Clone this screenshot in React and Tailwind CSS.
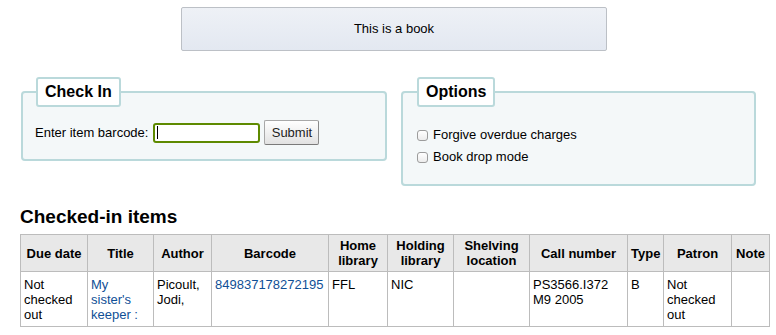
export default function App() {
  const colCls = [
    "w-[67px]",
    "w-[66px]",
    "w-[58px]",
    "w-[117px]",
    "w-[59px]",
    "w-[66px]",
    "w-[76px]",
    "w-[98px]",
    "w-[36px]",
    "w-[68px]",
    "w-[38px]",
  ];
  const headers = [
    "Due date",
    "Title",
    "Author",
    "Barcode",
    "Home library",
    "Holding library",
    "Shelving location",
    "Call number",
    "Type",
    "Patron",
    "Note",
  ];
  const th =
    "border border-[#bcbcbc] bg-[#e8e8e8] font-bold text-center align-middle px-[3px] py-[3px] leading-[15px]";
  const td =
    "border border-[#bcbcbc] align-top px-[3px] pt-[5px] pb-[4px] leading-[15px]";
  return (
    <div className="w-[776px] h-[335px] overflow-hidden bg-white text-black text-[13px] font-['Liberation_Sans',Arial,sans-serif]">
      <div className="pt-[7px]">
        <div className="ml-[181px] w-[426px] h-[44px] flex items-center justify-center border border-[#bcc0c6] rounded-[2px] bg-gradient-to-b from-[#eef1f6] to-[#e3e8f1]">
          This is a book
        </div>
      </div>

      <div className="flex items-start mt-[26px]">
        <fieldset className="ml-[21px] w-[366px] border-2 border-[#bad9db] rounded-[4px] bg-[#f4f8f9] px-[12px] pb-[14px]">
          <legend className="ml-[1px] h-[30px] px-[7px] border-2 border-[#bad9db] rounded-[3px] bg-white font-bold text-[16px] leading-[26px]">
            Check In
          </legend>
          <div className="mt-[13px] flex items-center h-[25px]">
            <span>Enter item barcode:</span>
            <div className="ml-[5px] w-[107px] h-[20px] border-2 border-[#5e8a00] rounded-[3px] bg-white flex items-center pl-[2px]">
              <span className="block w-[1px] h-[13px] bg-black"></span>
            </div>
            <div className="ml-[4px] w-[55px] h-[25px] flex items-center justify-center border border-[#a8a8a8] border-b-[#7a7a7a] border-r-[#8a8a8a] rounded-[2px] bg-gradient-to-b from-white to-[#e2e2e2] text-[#222]">
              Submit
            </div>
          </div>
        </fieldset>

        <fieldset className="ml-[14px] w-[355px] border-2 border-[#bad9db] rounded-[4px] bg-[#f4f8f9] px-[14px] pb-[16px]">
          <legend className="h-[30px] px-[7px] border-2 border-[#bad9db] rounded-[3px] bg-white font-bold text-[16px] leading-[26px]">
            Options
          </legend>
          <div className="mt-[17px] flex flex-col">
            <div className="h-[22px] flex items-center">
              <span className="block w-[11px] h-[11px] border border-[#9c9c9c] rounded-[3px] bg-gradient-to-b from-white to-[#ececec]"></span>
              <span className="ml-[5px]">Forgive overdue charges</span>
            </div>
            <div className="h-[22px] flex items-center">
              <span className="block w-[11px] h-[11px] border border-[#9c9c9c] rounded-[3px] bg-gradient-to-b from-white to-[#ececec]"></span>
              <span className="ml-[5px]">Book drop mode</span>
            </div>
          </div>
        </fieldset>
      </div>

      <h1 className="mt-[20px] ml-[20px] text-[19px] font-bold leading-[22px]">
        Checked-in items
      </h1>

      <table className="mt-[6px] ml-[20px] w-[750px] table-fixed border-collapse">
        <colgroup>
          {colCls.map((c, i) => (
            <col key={i} className={c} />
          ))}
        </colgroup>
        <thead>
          <tr>
            {headers.map((h) => (
              <th key={h} className={th}>
                {h}
              </th>
            ))}
          </tr>
        </thead>
        <tbody>
          <tr>
            <td className={td}>Not checked out</td>
            <td className={td}>
              <span className="text-[#0f4f96]">My sister's keeper :</span>
            </td>
            <td className={td}>Picoult, Jodi,</td>
            <td className={td}>
              <span className="text-[#0f4f96]">849837178272195</span>
            </td>
            <td className={td}>FFL</td>
            <td className={td}>NIC</td>
            <td className={td}></td>
            <td className={td}>PS3566.I372 M9 2005</td>
            <td className={td}>B</td>
            <td className={td}>Not checked out</td>
            <td className={td}></td>
          </tr>
        </tbody>
      </table>
    </div>
  );
}
